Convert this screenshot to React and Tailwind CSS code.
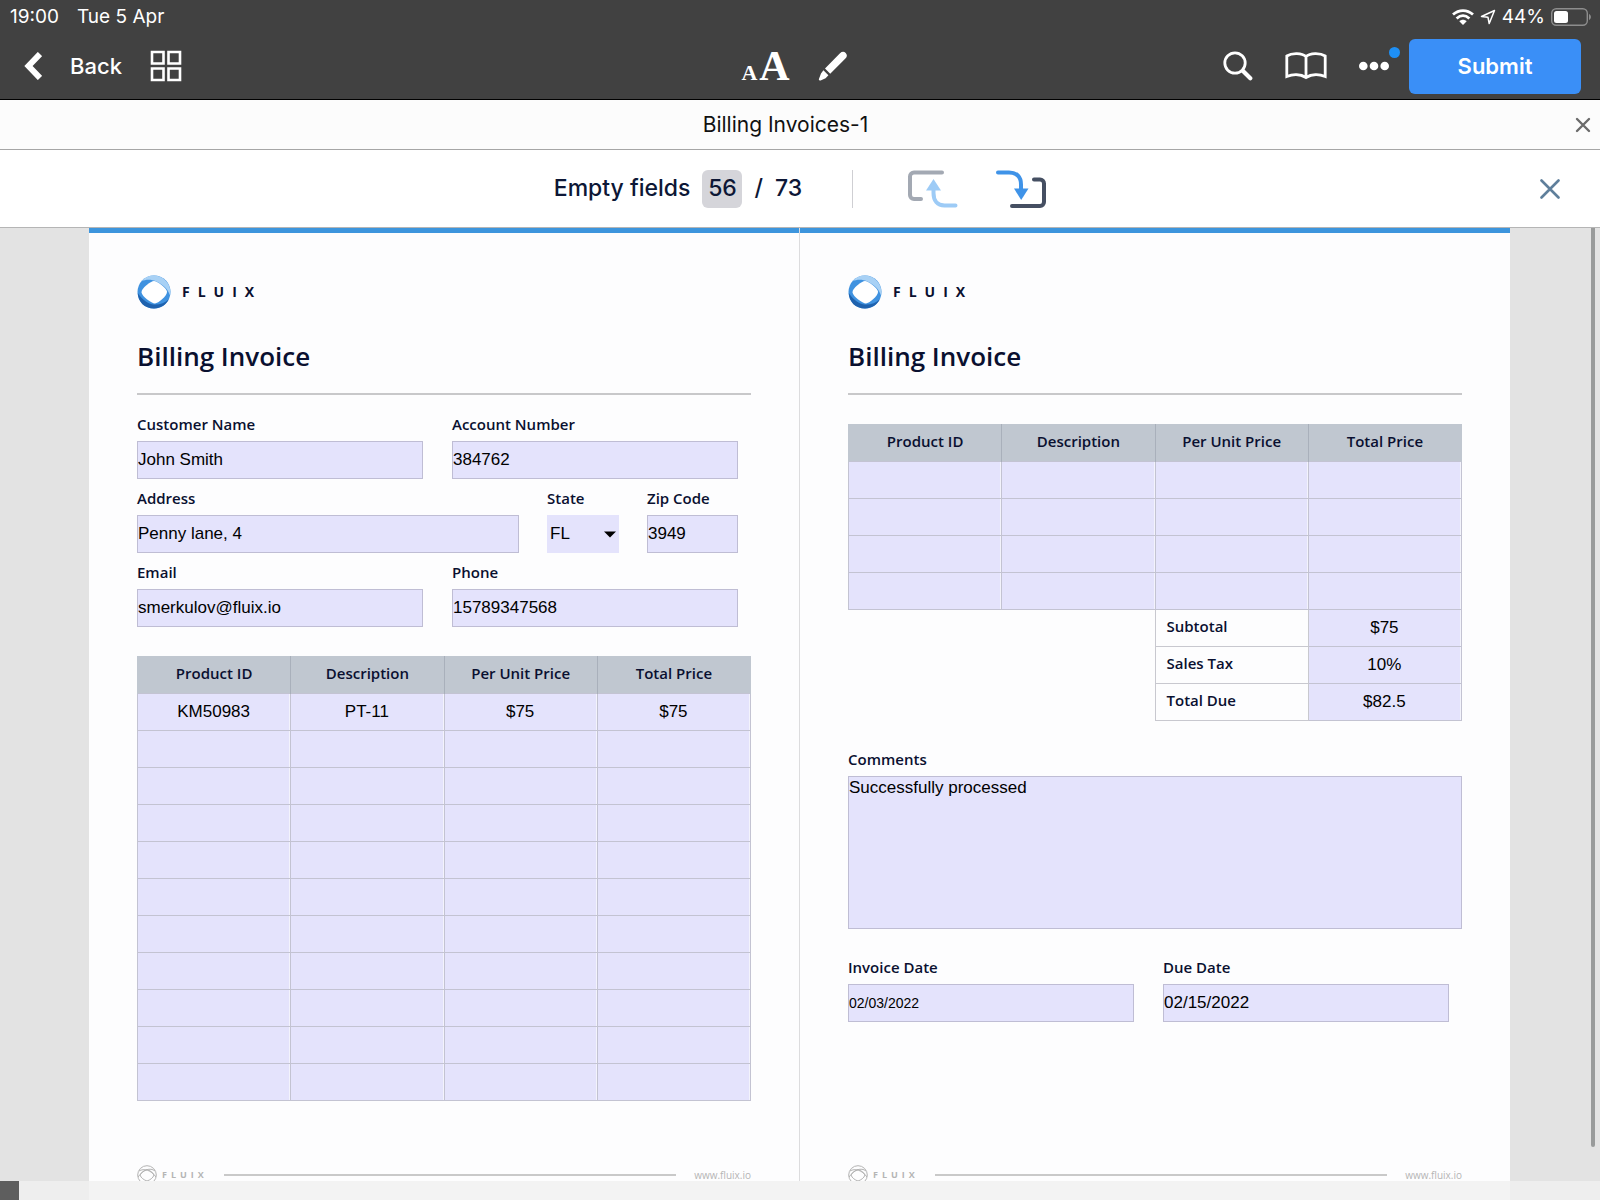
import React, { useState } from 'react';

const COLUMNS = ['Product ID', 'Description', 'Per Unit Price', 'Total Price'];
const FIRST_ITEM = ['KM50983', 'PT-11', '$75', '$75'];

const emptyRows = (count) => Array.from({ length: count }, () => ['', '', '', '']);

const TOTALS = [
  { label: 'Subtotal', value: '$75' },
  { label: 'Sales Tax', value: '10%' },
  { label: 'Total Due', value: '$82.5' }
];

/* Icons */

function FluixMark() {
  return (
    <svg viewBox="0 0 34 34" className="h-[34px] w-[34px]" aria-hidden="true">
      <circle cx="17" cy="17" r="16.500" fill="#3f92e0" />
      <path d="M4.500 6.200C10-1 22-1.500 28.500 5.500c4.500 4.500 5.500 10 4.500 15C31 14 26 10 20 6.800 14 4 9 4.500 4.500 6.200Z" fill="#a8d1f5" />
      <path d="M.8 18c3 5 8 9.500 14 11.200 6 1.300 12.500-.700 17.200-5.200C29 30 23.500 33.500 17 33.500 7.500 33.500 1 27 .8 18Z" fill="#1f62ae" />
      <path d="M17 6c2.500 0 12.500 6.500 13 10.500C30.500 21 21 28.300 18 28.500 15 28.700 5 21.500 4.500 17.500 4 13.500 14 6 17 6Z" fill="#fff" />
    </svg>
  );
}

function FluixOutline() {
  return (
    <svg viewBox="0 0 20 20" className="h-5 w-5" fill="none" stroke="#b3b3b3" aria-hidden="true">
      <circle cx="10" cy="10" r="9.300" />
      <path d="M2 6c5-3 12-1 17 6M18 6C13 2 6 5 1 12M10 4.500c3 1 6 3 7 5.500-1 3-4 5-7 6-3-1-6-3-7-6 1-2.500 4-4.500 7-5.500Z" />
    </svg>
  );
}

function PrevFieldIcon() {
  return (
    <svg viewBox="0 0 50 38" className="h-[38px] w-[50px]" fill="none" strokeWidth="4" strokeLinecap="round" aria-hidden="true">
      <path d="M34 2.500H6a4 4 0 0 0-4 4V25a4 4 0 0 0 4 4h7" stroke="#a3a9b3" />
      <path d="M25.500 18v5c0 8 4 12.500 11 12.500h11" stroke="#9dcbf6" />
      <path d="M18 20.500 25.500 9 33 20.500Z" fill="#9dcbf6" />
    </svg>
  );
}

function NextFieldIcon() {
  return (
    <svg viewBox="0 0 50 38" className="h-[38px] w-[50px]" fill="none" strokeWidth="4" strokeLinecap="round" aria-hidden="true">
      <path d="M38 9.500h6a4 4 0 0 1 4 4V32a4 4 0 0 1-4 4H16" stroke="#454f62" />
      <path d="M2 2.500h11c8 0 12 4.500 12 12V20" stroke="#3f93e8" />
      <path d="M18 18.500h14.500L25.200 30Z" fill="#3f93e8" />
    </svg>
  );
}

/* Top bars */

function StatusBar() {
  return (
    <div className="flex h-[33px] items-center justify-between pl-[10px] pr-[9px] text-[19px] leading-8 font-normal">
      <div className="flex gap-[18px]">
        <span>19:00</span>
        <span>Tue 5 Apr</span>
      </div>
      <div className="flex items-center gap-[6px]">
        <svg viewBox="0 0 22 16" className="h-4 w-[22px]" fill="none" stroke="#fff" strokeWidth="2.800" aria-hidden="true">
          <path d="M1 5.500c6-5.300 14-5.300 20 0M4.600 9.500c4-3.600 8.800-3.600 12.800 0" />
          <path d="M11 16 7.300 12.200c2.200-2 5.200-2 7.400 0Z" fill="#fff" stroke="none" />
        </svg>
        <svg viewBox="0 0 16 16" className="h-4 w-4" fill="none" stroke="#fff" strokeWidth="1.500" strokeLinejoin="round" aria-hidden="true">
          <path d="M14.500 1.500 1.500 7.500l6.500 .800 1.200 6.200Z" />
        </svg>
        <span>44%</span>
        <svg viewBox="0 0 40 18" className="h-[18px] w-10" aria-hidden="true">
          <rect x="0.700" y="0.700" width="35.600" height="16.600" rx="4.500" fill="none" stroke="#8d8d8d" strokeWidth="1.400" />
          <rect x="3" y="3" width="14" height="12" rx="2.500" fill="#fff" />
          <path d="M38 6c2.500 1 2.500 5 0 6Z" fill="#8d8d8d" />
        </svg>
      </div>
    </div>
  );
}

function Toolbar() {
  return (
    <div className="grid h-[66px] grid-cols-[1fr_auto_1fr] items-center pl-6 pr-[19px]">
      <div className="flex items-center gap-7">
        <button type="button" className="flex items-center gap-7 text-[22px] font-medium">
          <svg viewBox="0 0 18 28" className="h-7 w-[18px]" fill="none" stroke="#fff" strokeWidth="6" aria-hidden="true">
            <path d="M16 2 4.500 14 16 26" />
          </svg>
          Back
        </button>
        <button type="button" aria-label="Page thumbnails">
          <svg viewBox="0 0 32 32" className="h-8 w-8" fill="none" stroke="#fff" strokeWidth="2.600" aria-hidden="true">
            <path d="M2 2h11.500v11.500H2ZM18.500 2H30v11.500H18.500ZM2 18.500h11.500V30H2ZM18.500 18.500H30V30H18.500Z" />
          </svg>
        </button>
      </div>

      <div className="mr-4 flex items-center gap-7">
        <button type="button" aria-label="Text size" className="flex items-baseline gap-[2px] pt-[6px] font-['Liberation_Serif',serif] leading-[42px] font-bold">
          <span className="text-[22px]">A</span>
          <span className="text-[42px]">A</span>
        </button>
        <button type="button" aria-label="Annotate">
          <svg viewBox="0 0 30 30" className="h-[30px] w-[30px]" fill="#fff" aria-hidden="true">
            <path d="M22 2.200c2-1.900 4-1.900 5.700-.300 1.700 1.800 1.600 3.800-.300 5.700L12.200 22.800 7 17.500ZM5.400 19.300l5 5L7.600 27.200l-5 2.200c-1.300 .500-2.100-.300-1.600-1.600l2-5.200Z" />
          </svg>
        </button>
      </div>

      <div className="flex items-center justify-end">
        <button type="button" aria-label="Search" className="mr-8">
          <svg viewBox="0 0 30 30" className="h-[30px] w-[30px]" fill="none" stroke="#fff" strokeLinecap="round" aria-hidden="true">
            <circle cx="12" cy="12" r="10.200" strokeWidth="2.800" />
            <path d="m20.500 20.500 6.800 6.800" strokeWidth="4.200" />
          </svg>
        </button>
        <button type="button" aria-label="Reading view" className="mr-8">
          <svg viewBox="0 0 42 28" className="h-7 w-[42px]" fill="none" stroke="#fff" strokeWidth="2.800" aria-hidden="true">
            <path d="M21 4.500C17 .800 7 .500 1.800 4v20.500c6-2.500 13.700-2.500 19.200 1 5.500-3.500 13.200-3.500 19.200-1V4C35 .500 25 .800 21 4.500v21" />
          </svg>
        </button>
        <button type="button" aria-label="More" className="relative mr-5">
          <svg viewBox="0 0 30 10" className="h-[10px] w-[30px]" fill="#fff" aria-hidden="true">
            <circle cx="4.300" cy="5" r="4.300" />
            <circle cx="15" cy="5" r="4.300" />
            <circle cx="25.700" cy="5" r="4.300" />
          </svg>
          <span className="absolute -top-[14px] -right-[11px] h-[11px] w-[11px] rounded-full bg-[#1e8ff5]" />
        </button>
        <button type="button" className="h-[55px] w-[172px] rounded-md bg-[#3a8ff7] text-[22px] font-semibold">
          Submit
        </button>
      </div>
    </div>
  );
}

function DocumentTab() {
  return (
    <div className="flex h-[50px] items-center border-b border-[#a6a6a6] bg-[#fcfcfc]">
      <h1 className="flex-1 text-center text-[21px] text-[#111]">Billing Invoices-1</h1>
      <button type="button" aria-label="Close document" className="mr-[5px] flex w-6 justify-center">
        <svg viewBox="0 0 16 16" className="h-4 w-4" stroke="#6b6b6b" strokeWidth="2.400" strokeLinecap="round" aria-hidden="true">
          <path d="m2 2 12 12M14 2 2 14" />
        </svg>
      </button>
    </div>
  );
}

function EmptyFieldsBar() {
  return (
    <div className="grid h-[78px] grid-cols-[1fr_auto_1fr] items-center border-b border-[#b5b5b5] bg-white px-10">
      <div />
      <div className="flex items-center text-[23px] font-medium text-[#0d1736]">
        <span>Empty fields</span>
        <span className="mr-3 ml-3 flex h-[38px] w-10 items-center justify-center rounded-md bg-[#d5d5da]">56</span>
        <span>/</span>
        <span className="ml-3">73</span>
        <span className="mr-[55px] ml-[50px] h-[38px] w-px bg-[#cfcfd3]" />
        <button type="button" aria-label="Previous empty field" className="mr-[38px]">
          <PrevFieldIcon />
        </button>
        <button type="button" aria-label="Next empty field">
          <NextFieldIcon />
        </button>
      </div>
      <div className="flex justify-end">
        <button type="button" aria-label="Close empty fields">
          <svg viewBox="0 0 20 20" className="h-5 w-5" stroke="#5f7f9b" strokeWidth="2.600" strokeLinecap="round" aria-hidden="true">
            <path d="m1.500 1.500 17 17M18.500 1.500l-17 17" />
          </svg>
        </button>
      </div>
    </div>
  );
}

/* Form pieces */

function Label({ htmlFor, children }) {
  return (
    <label htmlFor={htmlFor} className="mb-2 block text-[15px] leading-[18px] font-semibold">
      {children}
    </label>
  );
}

function Field({ id, label, value, small }) {
  const [text, setText] = useState(value);

  return (
    <div className="min-w-0">
      <Label htmlFor={id}>{label}</Label>
      <input
        id={id}
        type="text"
        value={text}
        onChange={e => setText(e.target.value)}
        className={`block h-[38px] w-full border border-[#bfbdd4] bg-[#e4e3fc] font-['Liberation_Sans',sans-serif] text-black outline-none ${small ? 'text-[14px]' : 'text-[17px]'}`}
      />
    </div>
  );
}

function StateField() {
  return (
    <div className="min-w-0">
      <Label htmlFor="state">State</Label>
      <div className="relative">
        <select
          id="state"
          defaultValue="FL"
          className="block h-[38px] w-full appearance-none bg-[#e4e3fc] pl-[3px] font-['Liberation_Sans',sans-serif] text-[17px] text-black outline-none"
        >
          <option>CA</option>
          <option>FL</option>
          <option>NY</option>
        </select>
        <svg viewBox="0 0 12 7" className="pointer-events-none absolute top-4 right-[3px] h-[7px] w-3" fill="#000" aria-hidden="true">
          <path d="M0 .5h12L6 6.500Z" />
        </svg>
      </div>
    </div>
  );
}

function CellInput({ value, label }) {
  return (
    <input
      type="text"
      defaultValue={value}
      aria-label={label}
      className="block h-9 w-full border-r border-[#f3f3fc] bg-[#e4e3fc] text-center font-['Liberation_Sans',sans-serif] text-[17px] text-black outline-none"
    />
  );
}

function ItemsTable({ rows, totals = [] }) {
  return (
    <table className="w-full table-fixed border-collapse">
      <thead>
        <tr className="h-[37px] bg-[#c0c7d0] text-[15px] leading-5">
          {COLUMNS.map((column) => (
            <th key={column} className="border-x border-[#a9b0bb] p-0 pb-[2px] font-semibold first:border-l-[#c0c7d0] last:border-r-[#c0c7d0]">
              {column}
            </th>
          ))}
        </tr>
      </thead>
      <tbody>
        {rows.map((row, r) => (
          <tr key={r} className="h-[37px]">
            {row.map((value, c) => (
              <td key={c} className="border border-[#c3c3d2] p-0">
                <CellInput value={value} label={`${COLUMNS[c]}, row ${r + 1}`} />
              </td>
            ))}
          </tr>
        ))}
        {totals.map((total) => (
          <tr key={total.label} className="h-[37px]">
            <td colSpan={2} className="p-0" />
            <th scope="row" className="border border-[#c8c8cf] p-0 pb-1 pl-[11px] text-left text-[15px] leading-5 font-semibold">
              {total.label}
            </th>
            <td className="border border-[#c3c3d2] p-0">
              <CellInput value={total.value} label={total.label} />
            </td>
          </tr>
        ))}
      </tbody>
    </table>
  );
}

function InvoicePage({ children }) {
  return (
    <section className="flex min-w-0 flex-col border-t-5 border-[#3d95dd] bg-[#fdfdfe] px-12 pt-[42px] pb-10">
      <div className="flex items-center gap-[11px]">
        <FluixMark />
        <span className="text-[14px] leading-5 font-bold tracking-[8px]">FLUIX</span>
      </div>
      <h2 className="mt-[29px] border-b-2 border-[#c8c8ca] pb-[19px] text-[26px] leading-9 font-semibold">Billing Invoice</h2>

      <div className="flex-1">{children}</div>

      <footer className="mt-16 flex items-center text-[#b5b5b5]">
        <FluixOutline />
        <span className="ml-[5px] text-[9px] leading-[10px] font-bold tracking-[4px]">FLUIX</span>
        <span className="mr-[18px] ml-4 h-[2px] flex-1 bg-[#c9c9c9]" />
        <a href="#fluix" className="text-[10px] leading-[10px]">www.fluix.io</a>
      </footer>
    </section>
  );
}

export default function App() {
  return (
    <div className="flex h-screen flex-col overflow-hidden bg-[#e3e3e3] font-['Inter',sans-serif]">
      <header className="border-b border-black bg-[#414141] text-white">
        <StatusBar />
        <Toolbar />
      </header>
      <DocumentTab />
      <EmptyFieldsBar />

      {/* Document */}
      <main className="relative flex min-h-0 flex-1 flex-col">
        <div className="min-h-0 flex-1 overflow-y-auto pr-[90px] pl-[89px] [scrollbar-width:none]">
          <div className="grid grid-cols-[1fr_1px_1fr] bg-[#dcdcde] font-['Open_Sans',sans-serif] text-[#0a1030]">
            <InvoicePage>
              <div className="mt-5 mb-[29px] mr-[13px] space-y-[10px]">
                <div className="grid grid-cols-2 gap-[29px]">
                  <Field id="customer-name" label="Customer Name" value="John Smith" />
                  <Field id="account-number" label="Account Number" value="384762" />
                </div>
                <div className="grid grid-cols-[382fr_72fr_91fr] gap-7">
                  <Field id="address" label="Address" value="Penny lane, 4" />
                  <StateField />
                  <Field id="zip" label="Zip Code" value="3949" />
                </div>
                <div className="grid grid-cols-2 gap-[29px]">
                  <Field id="email" label="Email" value="smerkulov@fluix.io" />
                  <Field id="phone" label="Phone" value="15789347568" />
                </div>
              </div>
              <ItemsTable rows={[FIRST_ITEM, ...emptyRows(10)]} />
            </InvoicePage>

            <div />

            <InvoicePage>
              <div className="mt-[29px]">
                <ItemsTable rows={emptyRows(4)} totals={TOTALS} />
              </div>
              <div className="mt-[29px]">
                <Label htmlFor="comments">Comments</Label>
                <textarea
                  id="comments"
                  defaultValue="Successfully processed"
                  className="block h-[153px] w-full resize-none border border-[#bfbdd4] bg-[#e4e3fc] font-['Liberation_Sans',sans-serif] text-[17px] leading-[22px] text-black outline-none"
                />
              </div>
              <div className="mt-[29px] mr-[13px] grid grid-cols-2 gap-[29px]">
                <Field id="invoice-date" label="Invoice Date" value="02/03/2022" small />
                <Field id="due-date" label="Due Date" value="02/15/2022" />
              </div>
            </InvoicePage>
          </div>
        </div>

        {/* Scroll indicator */}
        <div className="absolute top-0 right-[5px] bottom-[34px] w-1 rounded-b-full bg-[#999b9b]" />
      </main>

      {/* Page slider strip */}
      <div className="flex h-[19px] bg-[#eeeeee]">
        <div className="w-[19px] bg-[#5e5e5e]" />
        <div className="mr-[90px] ml-[70px] flex-1 bg-[#f3f3f3]" />
      </div>
    </div>
  );
}
